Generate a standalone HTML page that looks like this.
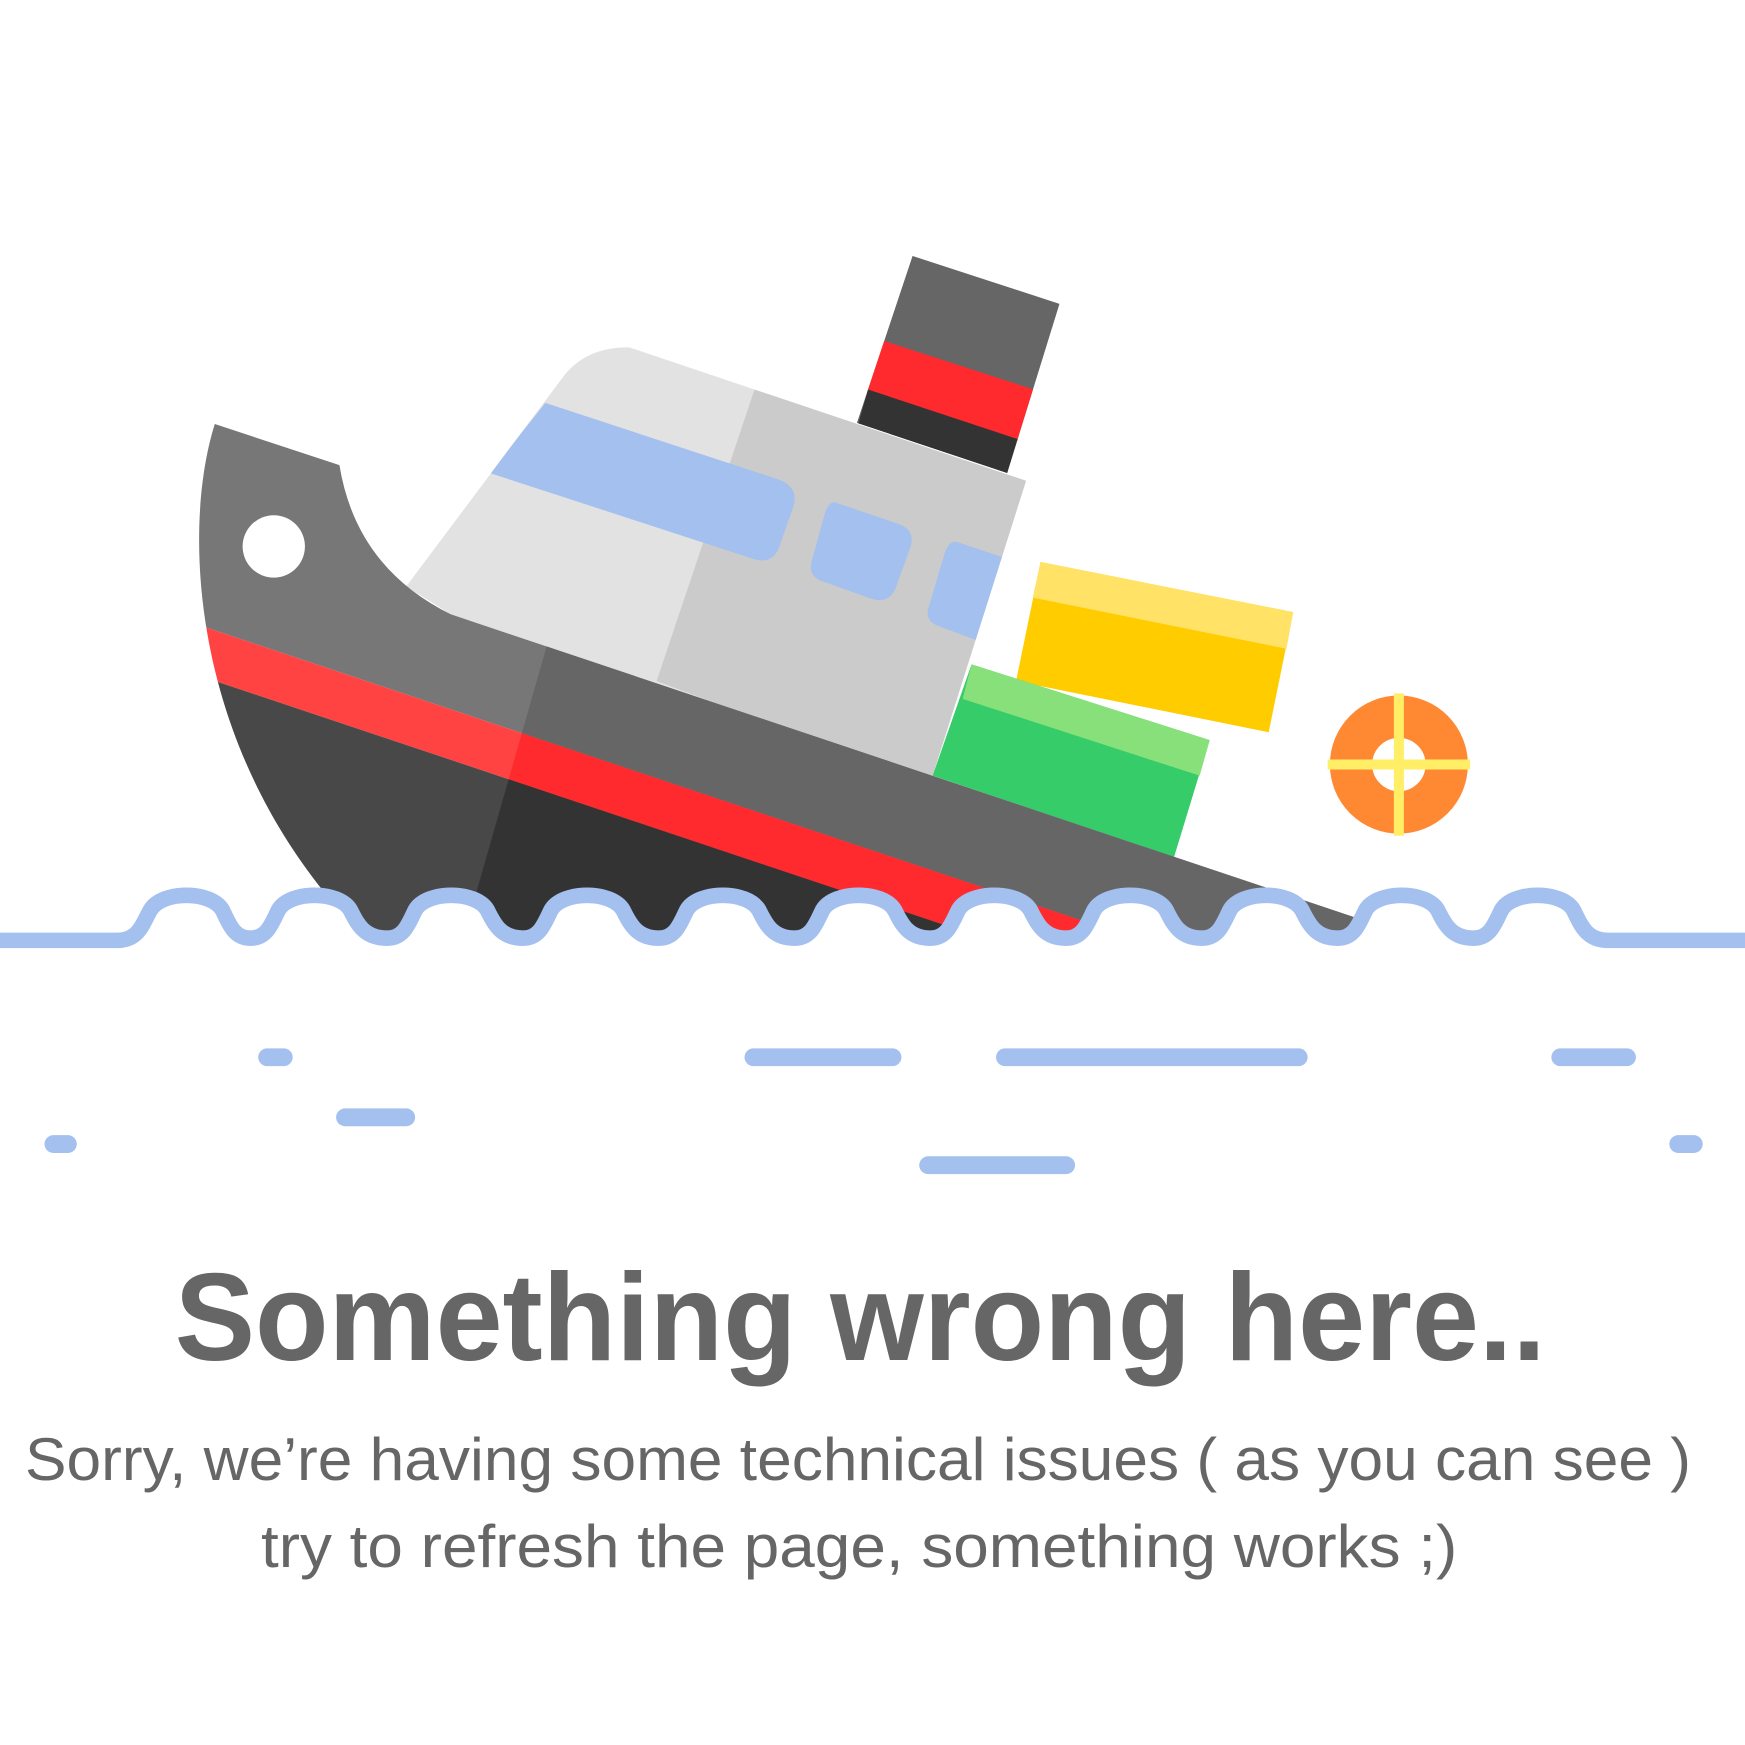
<!DOCTYPE html>
<html><head><meta charset="utf-8"><style>html,body{margin:0;padding:0;background:#fff}svg{display:block}</style></head>
<body>
<svg width="1745" height="1745" viewBox="0 0 1568 1568" xmlns="http://www.w3.org/2000/svg">
<defs>
<clipPath id="hull"><path d="M193,381 L305,418 Q320,510 405,552 L1300,852 L1300,900 L290,900 L290,800 C170,650 165,470 193,381 Z"/></clipPath>
<clipPath id="cab"><path d="M365,527 L505,340 Q525,312 565,312 L922,432 L838,697 L405,552 Z"/></clipPath>
<clipPath id="chim"><path d="M820,230 L952,273 L905,425 L770,380 Z"/></clipPath>
</defs>
<!-- chimney -->
<g clip-path="url(#chim)">
<rect x="700" y="200" width="300" height="300" fill="#666"/>
<path d="M790,305 L935,352 L925,400 L775,352 Z" fill="#ff2a2d"/>
<path d="M780,350 L925,398 L915,460 L760,420 Z" fill="#333"/>
</g>
<!-- cabin -->
<g clip-path="url(#cab)">
<rect x="300" y="280" width="700" height="450" fill="#e2e2e2"/>
<path d="M678,350 L960,440 L880,720 L590,612 Z" fill="#cbcbcb"/>
<path d="M490,362 L700,431 Q718,438 713,455 L700,492 Q694,508 676,502 L440,425 Z" fill="#a4c0ee"/>
<path d="M752,452 L808,471 Q823,477 818,492 L805,528 Q799,543 783,538 L738,522 Q725,517 730,502 L741,462 Q745,449 752,452 Z" fill="#a4c0ee"/>
<path d="M860,487 L920,507 L890,580 L842,562 Q830,557 835,544 L848,500 Q852,485 860,487 Z" fill="#a4c0ee"/>
</g>
<!-- yellow box -->
<path d="M935,505 L1162,550 L1140,658 L913,612 Z" fill="#ffcc00"/>
<path d="M935,505 L1162,550 L1156,583 L928,537 Z" fill="#ffe266"/>
<!-- green box -->
<path d="M873,597 L1087,665 L1055,770 L838,697 Z" fill="#37cc6a"/>
<path d="M873,597 L1087,665 L1078,697 L865,628 Z" fill="#88e07a"/>
<!-- hull -->
<g clip-path="url(#hull)">
<g transform="rotate(18.5 405 552)">
<rect x="-200" y="400" width="1500" height="233" fill="#777"/>
<rect x="-200" y="633" width="1500" height="43" fill="#ff4242"/>
<rect x="-200" y="676" width="1500" height="400" fill="#484848"/>
</g>
<clipPath id="rp"><path d="M492,578 L400,900 L1400,900 L1400,500 Z"/></clipPath>
<g clip-path="url(#rp)"><g transform="rotate(18.5 405 552)">
<rect x="-200" y="400" width="1500" height="233" fill="#666"/>
<rect x="-200" y="633" width="1500" height="43" fill="#ff2a2d"/>
<rect x="-200" y="676" width="1500" height="400" fill="#333"/>
</g></g>
</g>
<circle cx="246" cy="491" r="28" fill="#fff"/>
<!-- lifebuoy -->
<circle cx="1257" cy="687" r="43" fill="none" stroke="#ff8833" stroke-width="38"/>
<path d="M1257,623 V751 M1193,687 H1321" stroke="#ffee66" stroke-width="9"/>
<!-- waves -->
<g id="w">
<path d="M0,845 H105 C125,845 128,830 135,818 C145,800 190,800 200,818 C206,830 210,843 225,843 C240,843 244,830 250,818 C260,800 305,800 315,818 C321,830 327,843 348,843 C363,843 367,830 373,818 C383,800 428,800 438,818 C444,830 450,843 470,843 C485,843 489,830 495,818 C505,800 550,800 560,818 C566,830 572,843 592,843 C607,843 611,830 617,818 C627,800 672,800 682,818 C688,830 694,843 714,843 C729,843 733,830 739,818 C749,800 794,800 804,818 C810,830 816,843 836,843 C851,843 855,830 861,818 C871,800 916,800 926,818 C932,830 938,843 958,843 C973,843 977,830 983,818 C993,800 1038,800 1048,818 C1054,830 1060,843 1080,843 C1095,843 1099,830 1105,818 C1115,800 1160,800 1170,818 C1176,830 1182,843 1202,843 C1217,843 1221,830 1227,818 C1237,800 1282,800 1292,818 C1298,830 1304,843 1324,843 C1339,843 1343,830 1349,818 C1359,800 1404,800 1414,818 C1420,830 1425,845 1445,845 H1568 V1000 H0 Z" fill="#fff"/>
<path d="M0,845 H105 C125,845 128,830 135,818 C145,800 190,800 200,818 C206,830 210,843 225,843 C240,843 244,830 250,818 C260,800 305,800 315,818 C321,830 327,843 348,843 C363,843 367,830 373,818 C383,800 428,800 438,818 C444,830 450,843 470,843 C485,843 489,830 495,818 C505,800 550,800 560,818 C566,830 572,843 592,843 C607,843 611,830 617,818 C627,800 672,800 682,818 C688,830 694,843 714,843 C729,843 733,830 739,818 C749,800 794,800 804,818 C810,830 816,843 836,843 C851,843 855,830 861,818 C871,800 916,800 926,818 C932,830 938,843 958,843 C973,843 977,830 983,818 C993,800 1038,800 1048,818 C1054,830 1060,843 1080,843 C1095,843 1099,830 1105,818 C1115,800 1160,800 1170,818 C1176,830 1182,843 1202,843 C1217,843 1221,830 1227,818 C1237,800 1282,800 1292,818 C1298,830 1304,843 1324,843 C1339,843 1343,830 1349,818 C1359,800 1404,800 1414,818 C1420,830 1425,845 1445,845 H1568" fill="none" stroke="#a4c0ee" stroke-width="14" stroke-linejoin="round"/>
</g>
<g stroke="#a4c0ee" stroke-width="16" stroke-linecap="round">
<path d="M240,950 H255 M677,950 H802 M903,950 H1167 M1402,950 H1462 M310,1004 H365 M48,1028 H61 M1508,1028 H1522 M834,1047 H958"/>
</g>
<g fill="#666" font-family="'Liberation Sans',sans-serif" text-anchor="middle">
<text x="773" y="1222" font-size="112" font-weight="bold" textLength="1232" lengthAdjust="spacingAndGlyphs">Something wrong here..</text>
<text x="771" y="1330" font-size="54" textLength="1497" lengthAdjust="spacingAndGlyphs">Sorry, we’re having some technical issues ( as you can see )</text>
<text x="772" y="1408" font-size="54" textLength="1075" lengthAdjust="spacingAndGlyphs">try to refresh the page, something works ;)</text>
</g>
</svg>
</body></html>
